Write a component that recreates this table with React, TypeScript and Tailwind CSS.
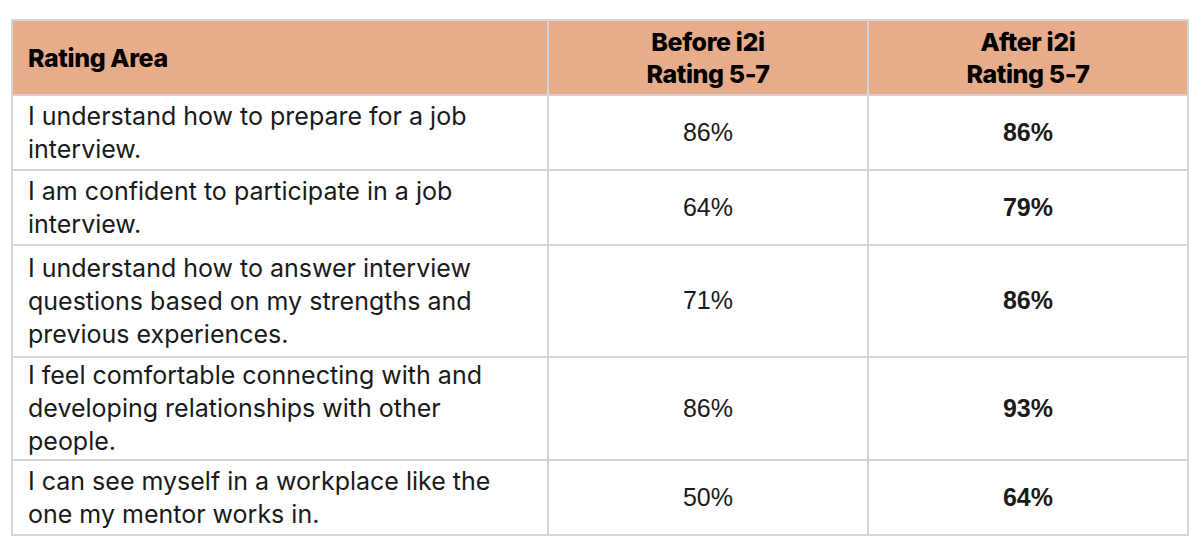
export default function App() {
  const rows = [
    { text: ["I understand how to prepare for a job", "interview."], before: "86%", after: "86%", h: "h-[75px]" },
    { text: ["I am confident to participate in a job", "interview."], before: "64%", after: "79%", h: "h-[75px]" },
    { text: ["I understand how to answer interview", "questions based on my strengths and", "previous experiences."], before: "71%", after: "86%", h: "h-[112px]" },
    { text: ["I feel comfortable connecting with and", "developing relationships with other", "people."], before: "86%", after: "93%", h: "h-[103px]" },
    { text: ["I can see myself in a workplace like the", "one my mentor works in."], before: "50%", after: "64%", h: "h-[75px]" },
  ];
  return (
    <div className="w-[1200px] h-[544px] bg-white pt-[19px] pl-[11px]">
      <table className="border-collapse w-[1176px] table-fixed">
        <colgroup>
          <col className="w-[536px]" />
          <col className="w-[320px]" />
          <col className="w-[320px]" />
        </colgroup>
        <thead>
          <tr className="h-[75px] bg-[#e7ac89]">
            <th className="border-2 border-[#d4d4d4] text-left align-middle pl-[15px] font-['Inter',sans-serif] font-extrabold tracking-[-0.4px] text-[25px] leading-[32px] text-black">
              Rating Area
            </th>
            <th className="border-2 border-[#d4d4d4] text-center align-middle font-['Inter',sans-serif] font-extrabold tracking-[-0.4px] text-[25px] leading-[32px] text-black">
              Before i2i
              <br />
              Rating 5-7
            </th>
            <th className="border-2 border-[#d4d4d4] text-center align-middle font-['Inter',sans-serif] font-extrabold tracking-[-0.4px] text-[25px] leading-[32px] text-black">
              After i2i
              <br />
              Rating 5-7
            </th>
          </tr>
        </thead>
        <tbody>
          {rows.map((r, i) => (
            <tr key={i} className={r.h}>
              <td className="border-2 border-[#d4d4d4] align-middle pl-[15px] font-['Inter',sans-serif] text-[25px] leading-[33px] text-[#1a1a1a] whitespace-nowrap">
                {r.text.map((t, j) => (
                  <div key={j}>{t}</div>
                ))}
              </td>
              <td className="border-2 border-[#d4d4d4] text-center align-middle font-['Liberation_Sans',Arial,sans-serif] text-[25px] text-[#1a1a1a]">
                {r.before}
              </td>
              <td className="border-2 border-[#d4d4d4] text-center align-middle font-['Liberation_Sans',Arial,sans-serif] font-bold text-[25px] text-[#1a1a1a]">
                {r.after}
              </td>
            </tr>
          ))}
        </tbody>
      </table>
    </div>
  );
}
